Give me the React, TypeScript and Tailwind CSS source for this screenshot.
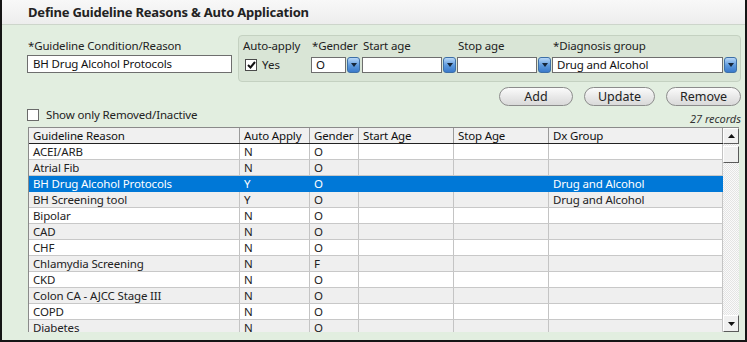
import React from "react";

const F = { fontFamily: '"Noto Sans", "Open Sans", sans-serif' };

function DropBtn() {
  return (
    <div className="w-[13px] h-[16px] rounded-[3px] border border-[#3d6fa6] bg-[linear-gradient(to_bottom,#b7d7f7,#5a97dc_55%,#3a7acb)] flex items-center justify-center shrink-0">
      <svg width="6" height="4" viewBox="0 0 6 4">
        <path d="M0 0 H6 L3 4 Z" fill="#15263a" />
      </svg>
    </div>
  );
}

function Field({ label, w, value, gapAfter }: { label: string; w: number; value?: string; gapAfter?: string }) {
  return (
    <div className={"flex flex-col " + (gapAfter ?? "")}>
      <div className="h-[16px] leading-[16px] text-[11.5px] text-[#222] pl-[1px] tracking-[-0.15px] whitespace-nowrap">{label}</div>
      <div className="flex gap-[1px] mt-[3px]">
        <div
          className="h-[16px] bg-white border border-[#6e6e6e] text-[11.5px] leading-[14px] pl-[4px] text-[#111] tracking-[-0.15px] whitespace-nowrap overflow-hidden"
          style={{ width: w }}
        >
          {value}
        </div>
        <DropBtn />
      </div>
    </div>
  );
}

function PillBtn({ label, w }: { label: string; w: string }) {
  return (
    <div
      className={
        "h-[19px] rounded-full border border-[#8c8c8c] bg-[linear-gradient(to_bottom,#fbfbfb,#e9e9e9_50%,#d9d9d9)] text-[12.5px] leading-[17px] text-center text-[#222] " +
        w
      }
    >
      {label}
    </div>
  );
}

const rows: [string, string, string, string][] = [
  ["ACEI/ARB", "N", "O", ""],
  ["Atrial Fib", "N", "O", ""],
  ["BH Drug Alcohol Protocols", "Y", "O", "Drug and Alcohol"],
  ["BH Screening tool", "Y", "O", "Drug and Alcohol"],
  ["Bipolar", "N", "O", ""],
  ["CAD", "N", "O", ""],
  ["CHF", "N", "O", ""],
  ["Chlamydia Screening", "N", "F", ""],
  ["CKD", "N", "O", ""],
  ["Colon CA - AJCC Stage III", "N", "O", ""],
  ["COPD", "N", "O", ""],
  ["Diabetes", "N", "O", ""],
];

const colW = ["w-[211px]", "w-[70px]", "w-[49px]", "w-[95px]", "w-[95px]", "w-[174px]"];
const headers = ["Guideline Reason", "Auto Apply", "Gender", "Start Age", "Stop Age", "Dx Group"];

export default function App() {
  return (
    <div
      style={F}
      className="w-[747px] h-[342px] bg-[#e2eee0] border-l-2 border-r-2 border-b-2 border-[#151515] flex flex-col overflow-hidden"
    >
      <div className="h-[25px] shrink-0 bg-[linear-gradient(to_bottom,#f8f8f8,#ededed)] border-b border-[#cdd5cb] pl-[26px] flex items-center">
        <span className="text-[13px] font-bold text-[#222] tracking-[-0.2px] leading-none pt-[1px]">
          Define Guideline Reasons &amp; Auto Application
        </span>
      </div>

      <div className="flex flex-col pl-[25px] pr-[4px] pt-[10px]">
        {/* top row */}
        <div className="flex h-[47px]">
          <div className="w-[211px] flex flex-col pt-[3px]">
            <div className="h-[16px] leading-[16px] text-[11.5px] text-[#222] pl-[1px] tracking-[-0.15px]">*Guideline Condition/Reason</div>
            <div className="mt-[1px] w-[205px] h-[18px] bg-white border border-[#6e6e6e] text-[11.5px] leading-[16px] pl-[5px] text-[#111] tracking-[-0.15px]">
              BH Drug Alcohol Protocols
            </div>
          </div>
          <div className="w-[503px] h-[47px] rounded-[4px] border border-[#c4d1c1] bg-[#d9e5d6] flex pl-[4px] pt-[2px]">
            <div className="w-[68px] flex flex-col">
              <div className="h-[16px] leading-[16px] text-[11.5px] text-[#222] tracking-[-0.15px]">Auto-apply</div>
              <div className="flex items-center mt-[4px] pl-[2px]">
                <div className="w-[12px] h-[12px] bg-white border border-[#4a4a4a] flex items-center justify-center">
                  <svg width="9" height="8" viewBox="0 0 9 8">
                    <path d="M1 4 L3.5 6.5 L8 1" stroke="#111" strokeWidth="2" fill="none" />
                  </svg>
                </div>
                <span className="ml-[5px] text-[11.5px] leading-[14px] text-[#222]">Yes</span>
              </div>
            </div>
            <Field label="*Gender" w={35} value="O" gapAfter="mr-[2px]" />
            <Field label="Start age" w={80} gapAfter="mr-[1px]" />
            <Field label="Stop age" w={80} gapAfter="mr-[1px]" />
            <Field label="*Diagnosis group" w={171} value="Drug and Alcohol" />
          </div>
        </div>

        {/* buttons */}
        <div className="flex justify-end gap-[11px] mt-[5px]">
          <PillBtn label="Add" w="w-[74px]" />
          <PillBtn label="Update" w="w-[71px]" />
          <PillBtn label="Remove" w="w-[75px]" />
        </div>

        {/* checkbox + records */}
        <div className="flex h-[21px] items-start">
          <div className="flex items-center pt-[3px]">
            <div className="w-[12px] h-[12px] bg-white border border-[#6a6a6a]" />
            <span className="ml-[7px] text-[11.5px] leading-[12px] text-[#222] tracking-[-0.15px]">Show only Removed/Inactive</span>
          </div>
          <div className="ml-auto pt-[6px] text-[11px] italic leading-[14px] text-[#333]">27 records</div>
        </div>

        {/* table */}
        <div className="ml-[1px] w-[711px] h-[205px] flex border-l border-t border-[#8a8a8a] bg-white overflow-hidden">
          <div className="w-[694px] flex flex-col">
            <div className="flex h-[16px] shrink-0 bg-[#f0f0f0] border-b border-[#222]">
              {headers.map((h, i) => (
                <div
                  key={h}
                  className={colW[i] + " shrink-0 h-full border-r border-[#9a9a9a] pl-[4px] text-[11.5px] leading-[15px] text-[#111] tracking-[-0.15px] whitespace-nowrap"}
                >
                  {h}
                </div>
              ))}
            </div>
            {rows.map((r, ri) => {
              const sel = ri === 2;
              const bg = sel ? "bg-[#0078d7] text-white" : ri % 2 === 0 ? "bg-white text-[#222]" : "bg-[#efefef] text-[#222]";
              const vals = [r[0], r[1], r[2], "", "", r[3]];
              return (
                <div key={ri} className={"flex h-[16px] shrink-0 border-b " + (sel ? "border-[#0078d7] " : "border-[#c8c8c8] ") + bg}>
                  {vals.map((v, i) => (
                    <div
                      key={i}
                      className={
                        colW[i] +
                        " shrink-0 h-full border-r pl-[4px] text-[11.5px] leading-[15px] tracking-[-0.15px] whitespace-nowrap " +
                        (sel ? "border-[#0078d7]" : "border-[#c4c4c4]")
                      }
                    >
                      {v}
                    </div>
                  ))}
                </div>
              );
            })}
          </div>
          {/* scrollbar */}
          <div className="w-[17px] h-full flex flex-col bg-[repeating-conic-gradient(#e4e4e4_0_25%,#fafafa_0_50%)] bg-[length:2px_2px]">
            <div className="h-[16px] shrink-0 bg-[#f0f0f0] border-t border-l border-t-white border-l-white border-b border-r border-b-[#5a5a5a] border-r-[#5a5a5a] flex items-center justify-center">
              <svg width="7" height="4" viewBox="0 0 7 4"><path d="M0 4 H7 L3.5 0 Z" fill="#111" /></svg>
            </div>
            <div className="mt-[2px] h-[17px] shrink-0 bg-[#f0f0f0] border border-t-white border-l-white border-b-[#5a5a5a] border-r-[#5a5a5a]" />
            <div className="flex-1" />
            <div className="h-[17px] shrink-0 bg-[#f0f0f0] border border-t-white border-l-white border-b-[#5a5a5a] border-r-[#5a5a5a] flex items-center justify-center">
              <svg width="7" height="4" viewBox="0 0 7 4"><path d="M0 0 H7 L3.5 4 Z" fill="#111" /></svg>
            </div>
          </div>
        </div>
      </div>
    </div>
  );
}
